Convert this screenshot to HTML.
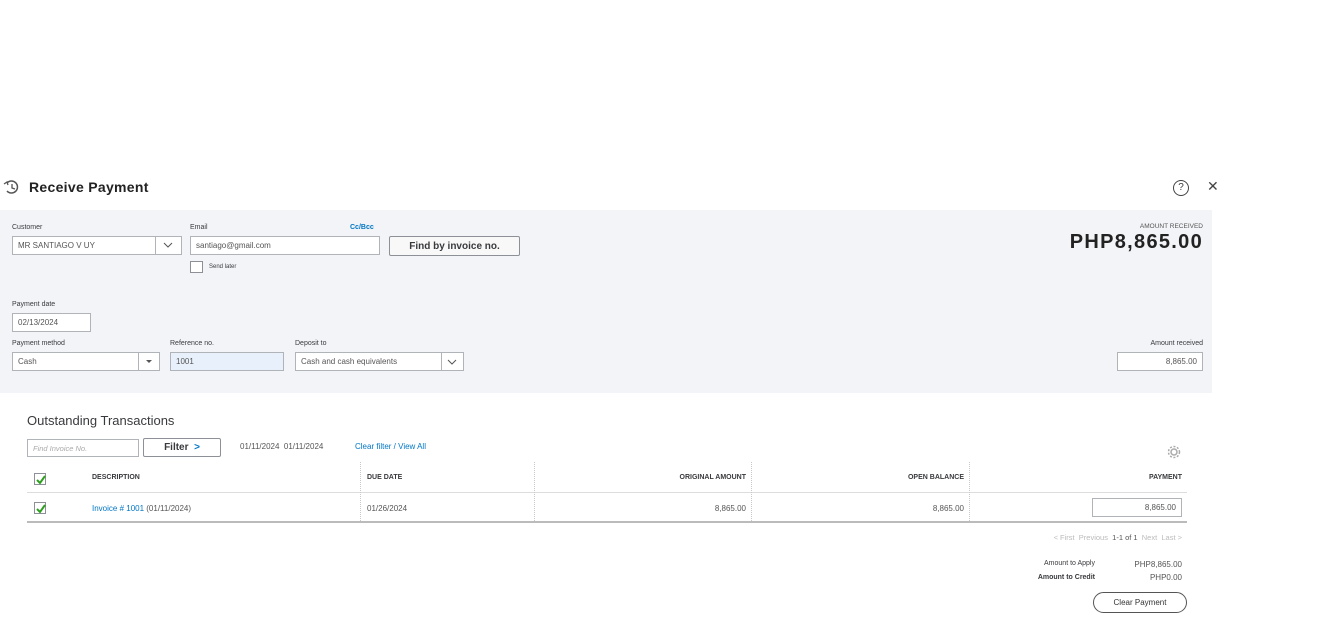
<!DOCTYPE html>
<html><head><style>
*{box-sizing:border-box;margin:0;padding:0}
body{width:1320px;height:622px;background:#fff;font-family:"Liberation Sans",sans-serif;color:#393a3d;position:relative;overflow:hidden}
.a{position:absolute}
.lbl{font-size:7px;color:#393a3d}
.inp{position:absolute;background:#fff;border:1px solid #b0b3b8;font-size:8px;padding:0 5px;line-height:17px;color:#555}
.panel{position:absolute;left:0;top:210px;width:1212px;height:183px;background:#f3f4f7}
.th{font-size:7px;font-weight:bold;color:#393a3d}
.cb{position:absolute;width:12px;height:12px;border:1px solid #8d9096;background:#fff}
.cb svg{position:absolute;left:1px;top:1px}
.vl{position:absolute;border-left:1px dotted #c8c8c8}
</style></head><body>
<svg class="a" style="left:3px;top:179px" width="18" height="16" viewBox="0 0 18 16"><path d="M4 4a6 6 0 1 1 0 8" fill="none" stroke="#555" stroke-width="1.5"/><path d="M9 5v4l3 1" fill="none" stroke="#555" stroke-width="1.3"/><path d="M1 5l3-2 1 3" fill="none" stroke="#555" stroke-width="1.3"/></svg>
<div class="a" style="left:29px;top:179px;font-size:14px;font-weight:bold;color:#222;letter-spacing:0.3px">Receive Payment</div>
<div class="a" style="left:1173px;top:180px;width:16px;height:16px;border:1.5px solid #444;border-radius:50%;font-size:10px;text-align:center;line-height:13px">?</div>
<div class="a" style="left:1207px;top:178px;font-size:14px;color:#444">✕</div>
<div class="panel"></div>
<div class="a lbl" style="left:12px;top:224px">Customer</div>
<div class="inp" style="left:12px;top:236px;width:170px;height:19px">MR SANTIAGO V UY</div>
<div class="a" style="left:155px;top:237px;width:1px;height:17px;background:#b0b3b8"></div>
<svg class="a" style="left:163px;top:242px" width="10" height="6"><path d="M1 1l4 4 4-4" fill="none" stroke="#555"/></svg>
<div class="a lbl" style="left:190px;top:224px">Email</div>
<div class="a" style="left:350px;top:224px;font-size:7px;color:#0077c5;font-weight:bold">Cc/Bcc</div>
<div class="inp" style="left:190px;top:236px;width:190px;height:19px">santiago@gmail.com</div>
<div class="a" style="left:389px;top:236px;width:131px;height:20px;border:1px solid #8d9096;border-radius:2px;background:#f8f8f8;font-size:10px;font-weight:bold;text-align:center;line-height:19px">Find by invoice no.</div>
<div class="a" style="left:190px;top:261px;width:13px;height:12px;border:1px solid #8d9096;background:#fff"></div>
<div class="a lbl" style="left:209px;top:264px;font-size:6px">Send later</div>
<div class="a" style="left:1120px;top:223px;width:83px;text-align:right;font-size:6.5px;color:#555">AMOUNT RECEIVED</div>
<div class="a" style="left:1000px;top:231px;width:203px;text-align:right;font-size:20px;font-weight:bold;color:#222;letter-spacing:1.3px">PHP8,865.00</div>
<div class="a lbl" style="left:12px;top:301px">Payment date</div>
<div class="inp" style="left:12px;top:313px;width:79px;height:19px">02/13/2024</div>
<div class="a lbl" style="left:12px;top:340px">Payment method</div>
<div class="inp" style="left:12px;top:352px;width:148px;height:19px">Cash</div>
<div class="a" style="left:138px;top:353px;width:1px;height:17px;background:#b0b3b8"></div>
<div class="a" style="left:146px;top:360px;border-left:3px solid transparent;border-right:3px solid transparent;border-top:3px solid #555"></div>
<div class="a lbl" style="left:170px;top:340px">Reference no.</div>
<div class="inp" style="left:170px;top:352px;width:114px;height:19px;background:#e8f0fb">1001</div>
<div class="a lbl" style="left:295px;top:340px">Deposit to</div>
<div class="inp" style="left:295px;top:352px;width:169px;height:19px">Cash and cash equivalents</div>
<div class="a" style="left:441px;top:353px;width:1px;height:17px;background:#b0b3b8"></div>
<svg class="a" style="left:447px;top:359px" width="10" height="6"><path d="M1 1l4 4 4-4" fill="none" stroke="#555"/></svg>
<div class="a lbl" style="left:1120px;top:340px;width:83px;text-align:right">Amount received</div>
<div class="inp" style="left:1117px;top:352px;width:86px;height:19px;text-align:right">8,865.00</div>

<div class="a" style="left:27px;top:413px;font-size:13px;color:#393a3d">Outstanding Transactions</div>
<div class="inp" style="left:27px;top:439px;width:112px;height:18px;font-style:italic;color:#aaa;font-size:7.5px">Find Invoice No.</div>
<div class="a" style="left:143px;top:438px;width:78px;height:19px;border:1px solid #8d9096;border-radius:2px;font-size:10px;font-weight:bold;text-align:center;line-height:18px">Filter &nbsp;<span style="color:#0077c5">&gt;</span></div>
<div class="a" style="left:240px;top:442px;font-size:8px;color:#555">01/11/2024 &nbsp;01/11/2024</div>
<div class="a" style="left:355px;top:442px;font-size:8px;color:#0077c5">Clear filter / View All</div>
<svg class="a" style="left:1167px;top:445px" width="14" height="14" viewBox="0 0 14 14"><circle cx="7" cy="7" r="3" fill="none" stroke="#aaa" stroke-width="1.5"/><circle cx="7" cy="7" r="5.5" fill="none" stroke="#aaa" stroke-width="1.5" stroke-dasharray="2 1.6"/></svg>

<div class="a" style="left:27px;top:492px;width:1160px;height:1px;background:#ddd"></div>
<div class="a" style="left:27px;top:521px;width:1160px;height:2px;background:#bbb"></div>
<div class="vl" style="left:360px;top:462px;height:59px"></div>
<div class="vl" style="left:534px;top:462px;height:59px"></div>
<div class="vl" style="left:751px;top:462px;height:59px"></div>
<div class="vl" style="left:969px;top:462px;height:59px"></div>
<div class="cb" style="left:34px;top:473px"><svg width="10" height="10"><path d="M1 5l3 3 5-7" fill="none" stroke="#2ca01c" stroke-width="2"/></svg></div>
<div class="cb" style="left:34px;top:502px"><svg width="10" height="10"><path d="M1 5l3 3 5-7" fill="none" stroke="#2ca01c" stroke-width="2"/></svg></div>
<div class="a th" style="left:92px;top:474px">DESCRIPTION</div>
<div class="a th" style="left:367px;top:474px">DUE DATE</div>
<div class="a th" style="left:600px;top:474px;width:146px;text-align:right">ORIGINAL AMOUNT</div>
<div class="a th" style="left:820px;top:474px;width:144px;text-align:right">OPEN BALANCE</div>
<div class="a th" style="left:1080px;top:474px;width:102px;text-align:right">PAYMENT</div>
<div class="a" style="left:92px;top:504px;font-size:8px;color:#555"><span style="color:#0077c5">Invoice # 1001</span> (01/11/2024)</div>
<div class="a" style="left:367px;top:504px;font-size:8px;color:#555">01/26/2024</div>
<div class="a" style="left:600px;top:504px;width:146px;text-align:right;font-size:8px;color:#555">8,865.00</div>
<div class="a" style="left:820px;top:504px;width:144px;text-align:right;font-size:8px;color:#555">8,865.00</div>
<div class="inp" style="left:1092px;top:498px;width:90px;height:19px;text-align:right">8,865.00</div>

<div class="a" style="left:1000px;top:533px;width:182px;text-align:right;font-size:7.5px;color:#bbb">&lt; First &nbsp;Previous &nbsp;<span style="color:#555">1-1 of 1</span> &nbsp;Next &nbsp;Last &gt;</div>
<div class="a" style="left:1000px;top:560px;width:95px;text-align:right;font-size:7px;color:#393a3d">Amount to Apply</div>
<div class="a" style="left:1100px;top:560px;width:82px;text-align:right;font-size:8px;color:#555">PHP8,865.00</div>
<div class="a" style="left:1000px;top:574px;width:95px;text-align:right;font-size:7px;font-weight:bold;color:#393a3d">Amount to Credit</div>
<div class="a" style="left:1100px;top:573px;width:82px;text-align:right;font-size:8px;color:#555">PHP0.00</div>
<div class="a" style="left:1093px;top:592px;width:94px;height:21px;border:1px solid #555;border-radius:11px;font-size:8px;text-align:center;line-height:19px;color:#333">Clear Payment</div>
</body></html>
